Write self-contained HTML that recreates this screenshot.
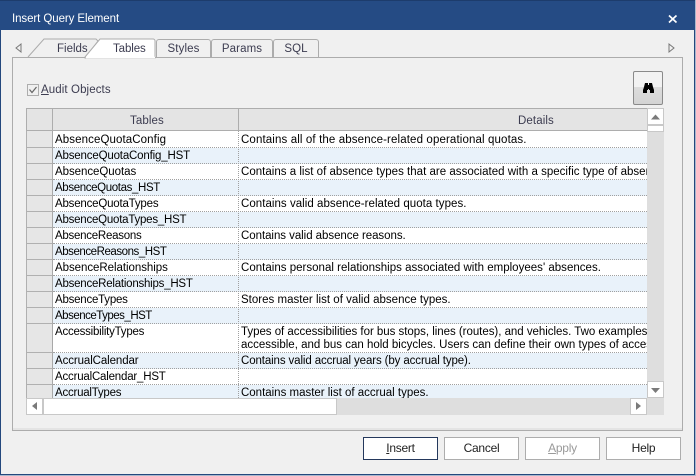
<!DOCTYPE html>
<html><head><meta charset="utf-8"><style>
html,body{margin:0;padding:0}
body{width:696px;height:476px;overflow:hidden;position:relative;background:#f0f0f0;font-family:"Liberation Sans",sans-serif;font-size:11.5px;letter-spacing:.1px;color:#000}
div{position:absolute;box-sizing:border-box}
svg{position:absolute;left:0;top:0}
.t{white-space:nowrap;line-height:14px;height:14px}
.d .t{letter-spacing:.015px}
.tab{top:39px;height:18px;text-align:center;line-height:19px;color:#3c3c50;background:#f0f0f0;border:1px solid #acacac;border-bottom:0;border-radius:3px 3px 0 0}
.r{left:53px;width:594px;border-bottom:1px dotted #a0a0a0}
.s{left:26px;width:27px;background:#e6e6e6;border-bottom:1px solid #b0b0b0;border-right:1px solid #a8a8a8;border-left:1px solid #b0b0b0}
.b{top:437px;height:23px;width:75px;border:1px solid #adadad;background:#fff;text-align:center;line-height:21px;font-size:12px;letter-spacing:-.25px;color:#222}
.sb{background:#fff;border:1px solid #c8c8c8}
</style></head><body>
<div style="left:0;top:0;width:696px;height:476px;background:#a9b8cd"></div>
<div style="left:0;top:0;width:695px;height:475px;background:#f0f0f0;border:1px solid #24487d"></div>
<div style="left:0;top:0;width:695px;height:30px;background:#254b84;border-top:1px solid #1d3c6c"></div>
<div class="t" style="left:12px;top:12px;color:#fff;font-size:11.5px;letter-spacing:-.08px">Insert Query Element</div>
<svg width="696" height="476" style="z-index:3">
<path d="M669 15.500l7.500 7M676.500 15.500l-7.500 7" stroke="#fff" stroke-width="1.700" fill="none"/>
<path d="M21 44v8l-5-4z" fill="#f0f0f0" stroke="#777"/>
<path d="M669 44v8l5-4z" fill="#f0f0f0" stroke="#777"/>
</svg>
<div style="left:12px;top:57px;width:671px;height:374px;border:1px solid #acacac;background:#f0f0f0"></div>
<div style="left:13px;top:428px;width:669px;height:2px;background:#e4e4e4"></div>
<svg width="696" height="476" style="z-index:1">
<path d="M28 57L44 39H96l2 2L86 57" fill="#f0f0f0" stroke="#acacac"/>
<path d="M85 57L100 39H153a2 2 0 0 1 2 2V58H85z" fill="#fff" stroke="#acacac"/>
<path d="M86 57.500H155" stroke="#fff" stroke-width="1.500"/>
</svg>
<div class="t" style="left:57px;top:42px;color:#3c3c50;z-index:2;letter-spacing:0">Fields</div>
<div class="t" style="left:113px;top:42px;color:#3c3c50;z-index:2;letter-spacing:-.1px">Tables</div>
<div class="tab" style="left:156px;width:55px">Styles</div>
<div class="tab" style="left:211px;width:62px">Params</div>
<div class="tab" style="left:273px;width:46px">SQL</div>
<div style="left:27px;top:84px;width:12px;height:12px;border:1px solid #adadad;background:#f0f0f0"></div>
<svg width="696" height="476"><path d="M29.500 89.500l2.500 3 4.500-5.500" stroke="#666" stroke-width="1.200" fill="none"/></svg>
<div class="t" style="left:41px;top:83px;color:#3c3c50"><u>A</u>udit Objects</div>
<div style="left:633px;top:71px;width:30px;height:34px;border:1px solid #8a8a8a;border-radius:2px;background:linear-gradient(#f2f2f2 0 47%,#dcdcdc 47%,#d4d4d4 100%)"></div>
<svg width="696" height="476" style="z-index:3"><path d="M645 83h3v2h1v-2h3l1 4 1 3v3h-4v-3h-1v-1h-1v1h-1v3h-4v-3l1-3z" fill="#000"/></svg>

<div style="left:26px;top:108px;width:621px;height:23px;background:#e4e4e4;border-top:1px solid #adadad;border-left:1px solid #adadad;border-bottom:1px solid #adadad"></div>
<div style="left:52px;top:109px;width:1px;height:22px;background:#adadad"></div>
<div style="left:238px;top:109px;width:1px;height:22px;background:#adadad"></div>
<div class="t" style="left:130px;top:114px;color:#3c3c50">Tables</div>
<div class="t" style="left:518px;top:114px;color:#3c3c50">Details</div>

<div class="r" style="top:131px;height:17px;background:#fff"></div>
<div class="r" style="top:148px;height:16px;background:#e9f2fa"></div>
<div class="r" style="top:164px;height:16px;background:#fff"></div>
<div class="r" style="top:180px;height:16px;background:#e9f2fa"></div>
<div class="r" style="top:196px;height:16px;background:#fff"></div>
<div class="r" style="top:212px;height:16px;background:#e9f2fa"></div>
<div class="r" style="top:228px;height:16px;background:#fff"></div>
<div class="r" style="top:244px;height:16px;background:#e9f2fa"></div>
<div class="r" style="top:260px;height:16px;background:#fff"></div>
<div class="r" style="top:276px;height:16px;background:#e9f2fa"></div>
<div class="r" style="top:292px;height:16px;background:#fff"></div>
<div class="r" style="top:308px;height:16px;background:#e9f2fa"></div>
<div class="r" style="top:324px;height:29px;background:#fff"></div>
<div class="r" style="top:353px;height:16px;background:#e9f2fa"></div>
<div class="r" style="top:369px;height:16px;background:#fff"></div>
<div class="r" style="top:385px;height:13px;background:#e9f2fa;border-bottom:0"></div>

<div class="s" style="top:131px;height:17px"></div>
<div class="s" style="top:148px;height:16px"></div>
<div class="s" style="top:164px;height:16px"></div>
<div class="s" style="top:180px;height:16px"></div>
<div class="s" style="top:196px;height:16px"></div>
<div class="s" style="top:212px;height:16px"></div>
<div class="s" style="top:228px;height:16px"></div>
<div class="s" style="top:244px;height:16px"></div>
<div class="s" style="top:260px;height:16px"></div>
<div class="s" style="top:276px;height:16px"></div>
<div class="s" style="top:292px;height:16px"></div>
<div class="s" style="top:308px;height:16px"></div>
<div class="s" style="top:324px;height:29px"></div>
<div class="s" style="top:353px;height:16px"></div>
<div class="s" style="top:369px;height:16px"></div>
<div class="s" style="top:385px;height:13px;border-bottom:0"></div>
<div style="left:238px;top:131px;width:0;height:267px;border-left:1px dotted #a0a0a0"></div>

<div class="t" style="left:55px;top:133px">AbsenceQuotaConfig</div>
<div class="t" style="left:55px;top:149px;letter-spacing:-.17px">AbsenceQuotaConfig_HST</div>
<div class="t" style="left:55px;top:165px;letter-spacing:-.05px">AbsenceQuotas</div>
<div class="t" style="left:55px;top:181px;letter-spacing:-.37px">AbsenceQuotas_HST</div>
<div class="t" style="left:55px;top:197px;letter-spacing:-.2px">AbsenceQuotaTypes</div>
<div class="t" style="left:55px;top:213px;letter-spacing:-.23px">AbsenceQuotaTypes_HST</div>
<div class="t" style="left:55px;top:229px;letter-spacing:-.26px">AbsenceReasons</div>
<div class="t" style="left:55px;top:245px;letter-spacing:-.45px">AbsenceReasons_HST</div>
<div class="t" style="left:55px;top:261px;letter-spacing:-.05px">AbsenceRelationships</div>
<div class="t" style="left:55px;top:277px;letter-spacing:-.23px">AbsenceRelationships_HST</div>
<div class="t" style="left:55px;top:293px;letter-spacing:-.23px">AbsenceTypes</div>
<div class="t" style="left:55px;top:309px;letter-spacing:-.5px">AbsenceTypes_HST</div>
<div class="t" style="left:55px;top:325px;letter-spacing:-.23px">AccessibilityTypes</div>
<div class="t" style="left:55px;top:354px;letter-spacing:-.1px">AccrualCalendar</div>
<div class="t" style="left:55px;top:370px;letter-spacing:-.2px">AccrualCalendar_HST</div>
<div class="t" style="left:55px;top:386px;letter-spacing:-.23px">AccrualTypes</div>

<div class="d" style="left:241px;top:131px;width:406px;height:267px;overflow:hidden">
<div class="t" style="left:0;top:2px;letter-spacing:.125px">Contains all of the absence-related operational quotas.</div>
<div class="t" style="left:0;top:34px">Contains a list of absence types that are associated with a specific type of absence quota.</div>
<div class="t" style="left:0;top:66px;letter-spacing:.04px">Contains valid absence-related quota types.</div>
<div class="t" style="left:0;top:98px;letter-spacing:-.05px">Contains valid absence reasons.</div>
<div class="t" style="left:0;top:130px">Contains personal relationships associated with employees' absences.</div>
<div class="t" style="left:0;top:162px">Stores master list of valid absence types.</div>
<div class="t" style="left:0;top:194px;letter-spacing:-.03px">Types of accessibilities for bus stops, lines (routes), and vehicles. Two examples are that a bus stop is wheelchair</div>
<div class="t" style="left:0;top:207px;letter-spacing:0">accessible, and bus can hold bicycles. Users can define their own types of accessibilities here.</div>
<div class="t" style="left:0;top:223px;letter-spacing:-.115px">Contains valid accrual years (by accrual type).</div>
<div class="t" style="left:0;top:255px;letter-spacing:-.01px">Contains master list of accrual types.</div>
</div>

<div style="left:647px;top:108px;width:17px;height:290px;background:#dedede"></div>
<div class="sb" style="left:647px;top:108px;width:17px;height:17px"></div>
<div class="sb" style="left:647px;top:125px;width:17px;height:7px"></div>
<div class="sb" style="left:647px;top:381px;width:17px;height:17px"></div>
<div style="left:26px;top:398px;width:638px;height:17px;background:#dedede"></div>
<div class="sb" style="left:26px;top:398px;width:17px;height:17px"></div>
<div class="sb" style="left:43px;top:398px;width:294px;height:17px"></div>
<div class="sb" style="left:630px;top:398px;width:17px;height:17px"></div>
<svg width="696" height="476" style="z-index:3">
<path d="M651 119.500h9l-4.500-5z" fill="#7a7a7a"/>
<path d="M651 388h9l-4.500 5z" fill="#7a7a7a"/>
<path d="M37 402v8l-5-4z" fill="#7a7a7a"/>
<path d="M636 402v8l5-4z" fill="#7a7a7a"/>
</svg>

<div class="b" style="left:363px;border-color:#24385c"><u>I</u>nsert</div>
<div class="b" style="left:444px">Cancel</div>
<div class="b" style="left:525px;color:#9a9a9a"><u>A</u>pply</div>
<div class="b" style="left:606px">Help</div>
</body></html>
